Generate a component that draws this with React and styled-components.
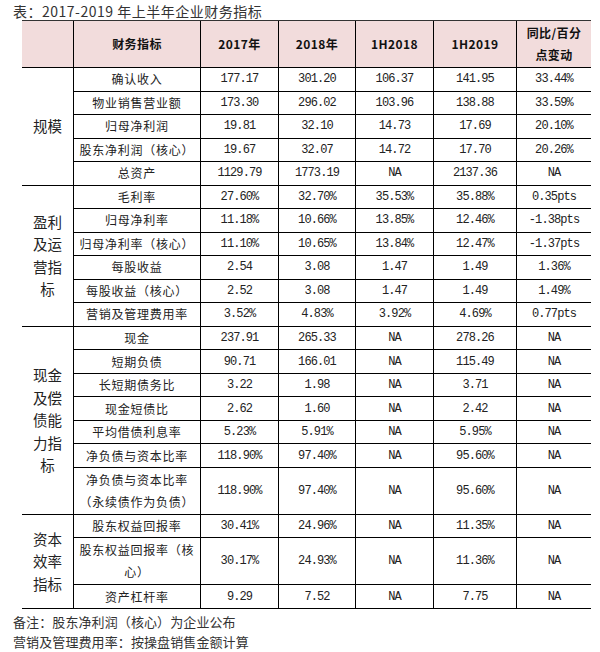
import React from "react";
import styled, { createGlobalStyle } from "styled-components";

const Global = createGlobalStyle`
  html, body {
    margin: 0;
    padding: 0;
    background: #ffffff;
    overflow: hidden;
  }
  body {
    font-family: "Noto Sans CJK SC", "Noto Sans", sans-serif;
    color: #222;
  }
`;

const Page = styled.div`
  width: 600px;
  height: 652px;
  display: flex;
  flex-direction: column;
  box-sizing: border-box;
`;

const Title = styled.h1`
  margin: 0;
  height: 20px;
  box-sizing: border-box;
  padding: 2px 0 0 13px;
  font-size: 14px;
  line-height: 18px;
  font-weight: 400;
  letter-spacing: 0.5px;
  color: #333;
  font-family: "Noto Sans CJK SC", sans-serif;
`;

const Table = styled.div`
  display: grid;
  grid-template-columns: 51px 127px 78px 77px 78px 83px 75px;
  grid-template-rows: 47px ${(p) => p.$rows};
  height: 590px;
  width: 569px;
  margin-left: 22px;
  box-sizing: border-box;
  border-top: 1px solid #333;
`;

const LINE = "1px solid #000";

const HeadCell = styled.div`
  background: #f2dcdc;
  display: flex;
  align-items: center;
  justify-content: center;
  text-align: center;
  box-sizing: border-box;
  border-bottom: ${LINE};
  border-left: ${(p) => (p.$first ? "none" : LINE)};
  font-family: "Noto Sans CJK SC", sans-serif;
  font-weight: 700;
  font-size: 12px;
  line-height: 22px;
  letter-spacing: 0.4px;
  color: #111;
  white-space: pre-line;
`;

const GroupCell = styled.div`
  grid-column: 1;
  grid-row: span ${(p) => p.$span};
  display: flex;
  align-items: center;
  justify-content: center;
  text-align: center;
  box-sizing: border-box;
  border-bottom: ${LINE};
  font-family: "Noto Sans CJK SC", sans-serif;
  font-size: 14.5px;
  line-height: 22.5px;
  color: #222;
  white-space: pre-line;
`;

const LabelCell = styled.div`
  display: flex;
  align-items: center;
  justify-content: center;
  text-align: center;
  box-sizing: border-box;
  border-bottom: ${LINE};
  border-left: ${LINE};
  padding: 0 4px;
  font-family: "Noto Sans CJK SC", sans-serif;
  font-size: 12px;
  line-height: 22px;
  letter-spacing: 0.75px;
  color: #222;
  white-space: pre-line;
`;

const NumCell = styled.div`
  display: flex;
  align-items: center;
  justify-content: center;
  box-sizing: border-box;
  border-bottom: ${LINE};
  border-left: ${LINE};
  font-family: "Liberation Mono", "DejaVu Sans Mono", monospace;
  font-size: 12px;
  letter-spacing: -0.9px;
  color: #222;
`;

const Notes = styled.div`
  padding: 3px 0 0 13px;
  font-family: "Noto Sans CJK SC", sans-serif;
  font-size: 13px;
  line-height: 20px;
  letter-spacing: 0.1px;
  color: #333;
`;

const headers = ["", "财务指标", "2017年", "2018年", "1H2018", "1H2019", "同比/百分\n点变动"];

const groups = [
  {
    name: "规模",
    rows: [
      ["确认收入", "177.17", "301.20", "106.37", "141.95", "33.44%"],
      ["物业销售营业额", "173.30", "296.02", "103.96", "138.88", "33.59%"],
      ["归母净利润", "19.81", "32.10", "14.73", "17.69", "20.10%"],
      ["股东净利润（核心）", "19.67", "32.07", "14.72", "17.70", "20.26%"],
      ["总资产", "1129.79", "1773.19", "NA", "2137.36", "NA"],
    ],
  },
  {
    name: "盈利\n及运\n营指\n标",
    rows: [
      ["毛利率", "27.60%", "32.70%", "35.53%", "35.88%", "0.35pts"],
      ["归母净利率", "11.18%", "10.66%", "13.85%", "12.46%", "-1.38pts"],
      ["归母净利率（核心）", "11.10%", "10.65%", "13.84%", "12.47%", "-1.37pts"],
      ["每股收益", "2.54", "3.08", "1.47", "1.49", "1.36%"],
      ["每股收益（核心）", "2.52", "3.08", "1.47", "1.49", "1.49%"],
      ["营销及管理费用率", "3.52%", "4.83%", "3.92%", "4.69%", "0.77pts"],
    ],
  },
  {
    name: "现金\n及偿\n债能\n力指\n标",
    rows: [
      ["现金", "237.91", "265.33", "NA", "278.26", "NA"],
      ["短期负债", "90.71", "166.01", "NA", "115.49", "NA"],
      ["长短期债务比", "3.22", "1.98", "NA", "3.71", "NA"],
      ["现金短债比", "2.62", "1.60", "NA", "2.42", "NA"],
      ["平均借债利息率", "5.23%", "5.91%", "NA", "5.95%", "NA"],
      ["净负债与资本比率", "118.90%", "97.40%", "NA", "95.60%", "NA"],
      ["净负债与资本比率\n（永续债作为负债）", "118.90%", "97.40%", "NA", "95.60%", "NA", true],
    ],
  },
  {
    name: "资本\n效率\n指标",
    rows: [
      ["股东权益回报率", "30.41%", "24.96%", "NA", "11.35%", "NA"],
      ["股东权益回报率（核\n心）", "30.17%", "24.93%", "NA", "11.36%", "NA", true],
      ["资产杠杆率", "9.29", "7.52", "NA", "7.75", "NA"],
    ],
  },
];

const rowTemplate = groups
  .flatMap((g) => g.rows.map((r) => (r[6] ? "2fr" : "1fr")))
  .join(" ");

export default function App() {
  return (
    <>
      <Global />
      <Page>
        <Title>表：2017-2019 年上半年企业财务指标</Title>
        <Table $rows={rowTemplate}>
          {headers.map((h, i) => (
            <HeadCell key={"h" + i} $first={i === 0}>
              {h}
            </HeadCell>
          ))}
          {groups.map((g) => (
            <React.Fragment key={g.name}>
              <GroupCell $span={g.rows.length}>{g.name}</GroupCell>
              {g.rows.map((r) => (
                <React.Fragment key={r[0]}>
                  <LabelCell>{r[0]}</LabelCell>
                  {r.slice(1, 6).map((v, j) => (
                    <NumCell key={j}>{v}</NumCell>
                  ))}
                </React.Fragment>
              ))}
            </React.Fragment>
          ))}
        </Table>
        <Notes>
          <div>备注：股东净利润（核心）为企业公布</div>
          <div>营销及管理费用率：按操盘销售金额计算</div>
        </Notes>
      </Page>
    </>
  );
}
